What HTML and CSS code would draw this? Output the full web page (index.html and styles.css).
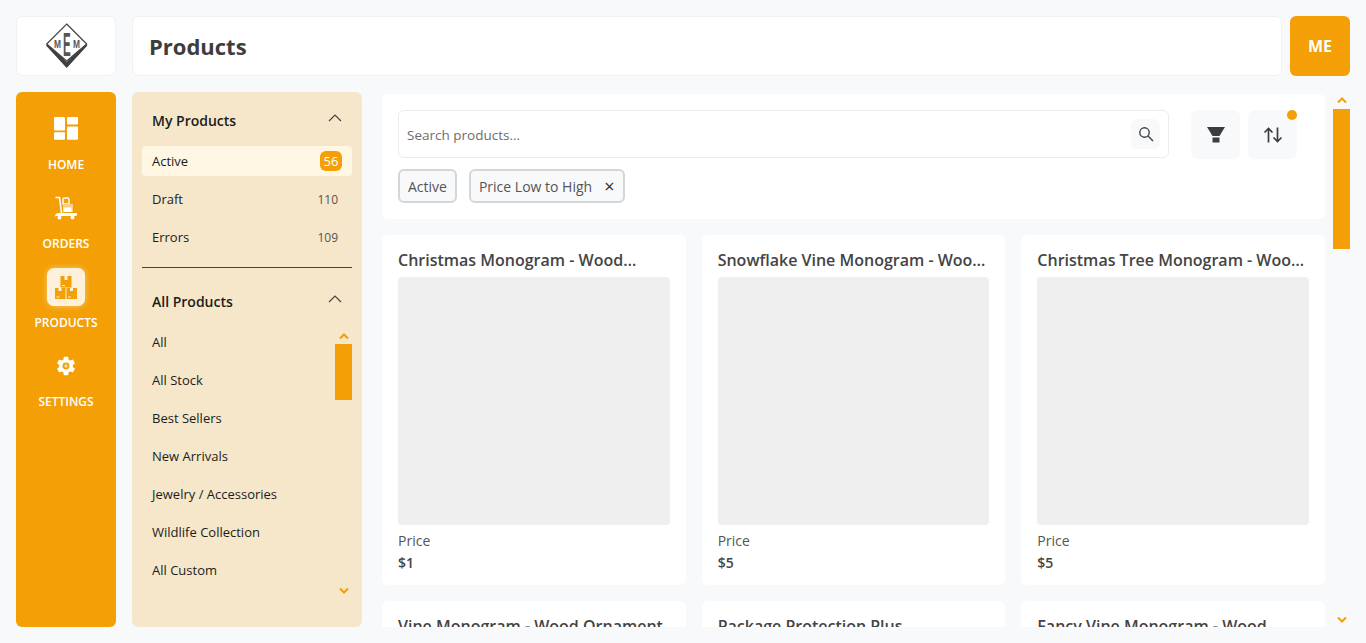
FILE: index.html
```html
<!DOCTYPE html>
<html lang="en">
<head>
	<meta charset="UTF-8">
	<title>Products</title>
	<link rel="stylesheet" href="styles.css">
</head>
<body>
	<div class="app">
		<header class="topbar">
			<div class="logo">
				<svg width="44" height="46" viewBox="0 0 44 46">
					<path d="M2 22.500 L22.700 45 L43.400 22.500 L41 20.500 L22.700 39 L4.400 20.500 Z" fill="#3f3f3f"/>
					<path d="M22.700 1 L42.700 21 L22.700 38 L2.700 21 Z" fill="#fff" stroke="#444" stroke-width="1.200"/>
					<text transform="translate(10 25) scale(.73 1)" class="logo-small">M</text>
					<text transform="translate(19 32.700) scale(.35 1)" class="logo-big">E</text>
					<text transform="translate(29 25) scale(.73 1)" class="logo-small">M</text>
				</svg>
			</div>
			<div class="title-bar"><h1>Products</h1></div>
			<div class="avatar">ME</div>
		</header>

		<div class="content">
			<nav class="sidenav">
				<a class="nav-item">
					<span class="nav-icon">
						<svg width="24" height="24" viewBox="0 0 24 24" fill="#fff">
							<rect x="0" y="0" width="11" height="13.500" rx="1"/>
							<rect x="0" y="15.200" width="11" height="7.500" rx="1"/>
							<rect x="13" y="0" width="11" height="7.500" rx="1"/>
							<rect x="13" y="9.500" width="11" height="13.200" rx="1"/>
						</svg>
					</span>
					<span>HOME</span>
				</a>
				<a class="nav-item">
					<span class="nav-icon">
						<svg width="24" height="24" viewBox="0 0 24 24">
							<path d="M1.500 1.500 H5.500 L7.500 17" fill="none" stroke="#fff" stroke-width="1.600"/>
							<path d="M9 8 V3.500 Q9 2 10.500 2 H13.500 Q15 2 15 3.500 V8 Z" fill="none" stroke="#fff" stroke-width="1.400"/>
							<rect x="9" y="8" width="10" height="8" fill="#f9cf85"/>
							<rect x="9.500" y="11.500" width="8" height="4.500" fill="#fff"/>
							<path d="M1 20.500 Q1 17 5 17 H23 V18.500 Q23 20 21 20 H2.500 Z" fill="#fff"/>
							<circle cx="5.500" cy="21.500" r="2" fill="#fff"/>
							<circle cx="18.500" cy="21.500" r="2" fill="#fff"/>
						</svg>
					</span>
					<span>ORDERS</span>
				</a>
				<a class="nav-item">
					<span class="nav-icon nav-icon-active">
						<svg width="22" height="23" viewBox="0 0 22 23" fill="#f39f05">
							<rect x="5.500" y="0" width="11" height="11.500"/>
							<rect x="0" y="12" width="10.500" height="11"/>
							<rect x="11.500" y="12" width="10.500" height="11"/>
							<rect x="9.500" y="0" width="3" height="4" fill="#fdf1dc"/>
							<rect x="3.500" y="12" width="3" height="3" fill="#fdf1dc"/>
							<rect x="15" y="12" width="3" height="3" fill="#fdf1dc"/>
							<rect x="7" y="9" width="3" height="1" fill="#fdf1dc"/>
							<rect x="1.500" y="20.500" width="3" height="1" fill="#fdf1dc"/>
							<rect x="13" y="20.500" width="3" height="1" fill="#fdf1dc"/>
						</svg>
					</span>
					<span>PRODUCTS</span>
				</a>
				<a class="nav-item">
					<span class="nav-icon">
						<svg width="22" height="22" viewBox="0 0 24 24">
							<path fill="#fff" fill-rule="evenodd" d="M19.430 12.980c.04-.32.070-.64.070-.98s-.03-.66-.07-.98l2.110-1.650c.19-.15.240-.42.120-.64l-2-3.460c-.12-.22-.39-.3-.61-.22l-2.490 1c-.52-.4-1.080-.73-1.690-.98l-.38-2.650A.488.488 0 0 0 14 2h-4c-.25 0-.46.18-.49.420l-.38 2.650c-.61.25-1.170.59-1.690.98l-2.490-1c-.23-.09-.49 0-.61.22l-2 3.460c-.13.22-.07.49.12.64l2.110 1.650c-.04.32-.07.65-.07.980s.03.66.07.98l-2.110 1.650c-.19.15-.24.42-.12.64l2 3.460c.12.22.39.3.61.22l2.490-1c.52.4 1.080.73 1.690.98l.38 2.650c.03.24.24.42.49.42h4c.25 0 .46-.18.49-.42l.38-2.650c.61-.25 1.170-.59 1.690-.98l2.490 1c.23.09.49 0 .61-.22l2-3.460c.12-.22.07-.49-.12-.64l-2.110-1.650zM12 15.800a3.800 3.800 0 1 1 0-7.600 3.800 3.800 0 0 1 0 7.600z"/>
							<circle cx="12" cy="12" r="1.800" fill="#fbdca6"/>
						</svg>
					</span>
					<span>SETTINGS</span>
				</a>
			</nav>

			<aside class="panel">
				<div class="panel-head">
					<span>My Products</span>
					<svg class="head-chevron" width="16" height="10" viewBox="0 0 16 10"><path d="M2 8 L8 2 L14 8" fill="none" stroke="#444" stroke-width="1.200"/></svg>
				</div>
				<ul class="my-list">
					<li class="active"><span>Active</span><span class="badge">56</span></li>
					<li><span>Draft</span><span class="count">110</span></li>
					<li><span>Errors</span><span class="count">109</span></li>
				</ul>
				<hr class="divider">
				<div class="panel-head panel-head-all">
					<span>All Products</span>
					<svg class="head-chevron" width="16" height="10" viewBox="0 0 16 10"><path d="M2 8 L8 2 L14 8" fill="none" stroke="#444" stroke-width="1.200"/></svg>
				</div>
				<div class="all-wrap">
					<ul class="all-list">
						<li>All</li>
						<li>All Stock</li>
						<li>Best Sellers</li>
						<li>New Arrivals</li>
						<li>Jewelry / Accessories</li>
						<li>Wildlife Collection</li>
						<li>All Custom</li>
					</ul>
					<div class="scroller scroller-small">
						<svg class="arrow" width="10" height="7" viewBox="0 0 10 7"><path d="M1 5.500 L5 1.500 L9 5.500" fill="none" stroke="#f39f05" stroke-width="2"/></svg>
						<div class="thumb"></div>
						<svg class="arrow arrow-down" width="10" height="7" viewBox="0 0 10 7"><path d="M1 1.500 L5 5.500 L9 1.500" fill="none" stroke="#f39f05" stroke-width="2"/></svg>
					</div>
				</div>
			</aside>

			<main class="main">
				<div class="main-col">
					<section class="toolbar">
						<div class="toolbar-left">
							<div class="search">
								<span class="search-text">Search products...</span>
								<span class="search-btn">
									<svg width="16" height="16" viewBox="0 0 16 16"><circle cx="6.500" cy="6.500" r="4.700" fill="none" stroke="#444" stroke-width="1.400"/><path d="M10 10 L15 15" stroke="#444" stroke-width="1.400"/></svg>
								</span>
							</div>
							<div class="chips">
								<span class="chip">Active</span>
								<span class="chip">Price Low to High<span class="chip-x">×</span></span>
							</div>
						</div>
						<div class="tool-btn">
							<svg width="18" height="16" viewBox="0 0 18 16" fill="#3d3d3d"><path d="M0 0 H18 L12.500 9 H5.500 Z"/><rect x="5.500" y="10.500" width="7" height="5"/></svg>
						</div>
						<div class="tool-btn">
							<span class="dot"></span>
							<svg width="20" height="16" viewBox="0 0 20 16" fill="none" stroke="#3d3d3d" stroke-width="1.700"><path d="M5.500 15.500 V1.500 M1.500 5.500 L5.500 1.500 L9.500 5.500"/><path d="M14.500 0.500 V14.500 M10.500 10.500 L14.500 14.500 L18.500 10.500"/></svg>
						</div>
					</section>

					<section class="grid">
						<article class="card">
							<h2>Christmas Monogram - Wood Ornament</h2>
							<div class="thumb-img"></div>
							<div class="price-label">Price</div>
							<div class="price">$1</div>
						</article>
						<article class="card">
							<h2>Snowflake Vine Monogram - Wood Ornament</h2>
							<div class="thumb-img"></div>
							<div class="price-label">Price</div>
							<div class="price">$5</div>
						</article>
						<article class="card">
							<h2>Christmas Tree Monogram - Wood Ornament</h2>
							<div class="thumb-img"></div>
							<div class="price-label">Price</div>
							<div class="price">$5</div>
						</article>
						<article class="card">
							<h2>Vine Monogram - Wood Ornament</h2>
							<div class="thumb-img"></div>
						</article>
						<article class="card">
							<h2>Package Protection Plus</h2>
							<div class="thumb-img"></div>
						</article>
						<article class="card">
							<h2>Fancy Vine Monogram - Wood</h2>
							<div class="thumb-img"></div>
						</article>
					</section>
				</div>
				<div class="scroller scroller-main">
					<svg class="arrow" width="10" height="7" viewBox="0 0 10 7"><path d="M1 5.500 L5 1.500 L9 5.500" fill="none" stroke="#f39f05" stroke-width="2"/></svg>
					<div class="thumb"></div>
					<svg class="arrow arrow-down" width="10" height="7" viewBox="0 0 10 7"><path d="M1 1.500 L5 5.500 L9 1.500" fill="none" stroke="#f39f05" stroke-width="2"/></svg>
				</div>
			</main>
		</div>
	</div>
</body>
</html>
```

FILE: styles.css
```css
* {
	box-sizing: border-box;
}
html, body {
	height: 100%;
	margin: 0;
}
body {
	overflow: hidden;
	background-color: #f8f9fb;
	font-family: "Open Sans", "Noto Sans", sans-serif;
	color: #3d3d3d;
}
.app {
	display: flex;
	flex-direction: column;
	gap: 16px;
	height: 643px;
	padding: 16px;
}

/* top bar */
.topbar {
	display: flex;
	flex: none;
	height: 60px;
}
.logo {
	display: flex;
	align-items: center;
	justify-content: center;
	flex: none;
	width: 100px;
	margin-right: 16px;
	background-color: #fff;
	border: 1px solid #f0f1f3;
	border-radius: 6px;
}
.logo-small, .logo-big {
	fill: #555;
	font-family: "Liberation Sans", sans-serif;
	font-weight: 700;
}
.logo-small {
	font-size: 11.500px;
}
.logo-big {
	font-size: 33px;
}
.title-bar {
	display: flex;
	align-items: center;
	flex: 1;
	padding-left: 16px;
	margin-right: 8px;
	background-color: #fff;
	border: 1px solid #eff0f2;
	border-radius: 6px;
}
.title-bar h1 {
	margin: 0;
	font-size: 22px;
	font-weight: 700;
	color: #3d3d3d;
}
.avatar {
	display: flex;
	align-items: center;
	justify-content: center;
	flex: none;
	width: 60px;
	background-color: #f39f05;
	border-radius: 6px;
	color: #fff;
	font-size: 16px;
	font-weight: 700;
}

.content {
	display: flex;
	flex: 1;
	min-height: 0;
}

/* left nav */
.sidenav {
	flex: none;
	width: 100px;
	margin-right: 16px;
	padding-top: 18px;
	background-color: #f39f05;
	border-radius: 6px;
}
.nav-item {
	display: flex;
	flex-direction: column;
	align-items: center;
	height: 79px;
	color: #fff;
	font-size: 12px;
	font-weight: 600;
}
.nav-icon {
	display: flex;
	align-items: center;
	justify-content: center;
	width: 38px;
	height: 38px;
	margin-bottom: 8px;
}
.nav-icon-active {
	background-color: #fdf1dc;
	border-radius: 7px;
	box-shadow: 0 0 6px rgba(255, 255, 255, .45);
}

/* products panel */
.panel {
	display: flex;
	flex-direction: column;
	flex: none;
	width: 230px;
	margin-right: 20px;
	padding: 0 10px;
	background-color: #f6e7ca;
	border-radius: 6px;
	color: #1c1c1c;
	font-size: 13px;
}
.panel-head {
	display: flex;
	align-items: center;
	justify-content: space-between;
	flex: none;
	height: 54px;
	padding: 2px 9px 0 10px;
	font-size: 14px;
	font-weight: 600;
}
.panel-head-all {
	margin-top: 5px;
}
.head-chevron {
	margin-top: -4px;
}
.panel ul {
	margin: 0;
	padding: 0;
	list-style: none;
}
.my-list li {
	display: flex;
	align-items: center;
	justify-content: space-between;
	height: 38px;
	padding: 0 14px 0 10px;
}
.my-list li.active {
	height: 30px;
	margin-bottom: 4px;
	padding-right: 10px;
	background-color: #fff6e4;
	border-radius: 4px;
}
.badge {
	width: 22px;
	line-height: 20px;
	text-align: center;
	background-color: #f39f05;
	border-radius: 6px;
	color: #fff;
}
.count {
	color: #555;
	font-size: 12px;
}
.divider {
	flex: none;
	width: 100%;
	margin: 11px 0 0;
	border: 0;
	border-top: 1px solid #444;
}
.all-wrap {
	display: flex;
	flex: 1;
	min-height: 0;
	margin-top: -4px;
}
.all-list {
	flex: 1;
}
.all-list li {
	display: flex;
	align-items: center;
	height: 38px;
	padding-left: 10px;
}
.scroller {
	display: flex;
	flex-direction: column;
	align-items: center;
	flex: none;
	width: 17px;
}
.thumb {
	width: 17px;
	background-color: #f39f05;
}
.arrow {
	flex: none;
}
.arrow-down {
	margin-top: auto;
}
.scroller-small {
	padding: 10px 0 33px;
}
.scroller-small .thumb {
	height: 56px;
	margin-top: 4px;
}

/* main column */
.main {
	display: flex;
	flex: 1;
	min-width: 0;
	overflow: hidden;
}
.main-col {
	flex: none;
	width: 943px;
	margin-right: 8px;
	padding-top: 2px;
	overflow: hidden;
}
.scroller-main {
	padding: 5px 0 4px;
}
.scroller-main .thumb {
	height: 140px;
	margin-top: 5px;
}
.toolbar {
	display: flex;
	align-items: flex-start;
	height: 125px;
	margin-bottom: 16px;
	padding: 16px 28px 0 16px;
	background-color: #fff;
	border-radius: 6px;
}
.toolbar-left {
	flex: 1;
	margin-right: 22px;
}
.search {
	display: flex;
	align-items: center;
	justify-content: space-between;
	height: 48px;
	padding: 0 8px;
	border: 1px solid #ececee;
	border-radius: 6px;
	font-size: 13.500px;
	color: #6d6d6d;
}
.search-text {
	padding-top: 1px;
}
.search-btn {
	display: flex;
	align-items: center;
	justify-content: center;
	width: 29px;
	height: 30px;
	background-color: #f8f9fb;
	border-radius: 6px;
}
.chips {
	display: flex;
	gap: 12px;
	margin-top: 11px;
}
.chip {
	display: flex;
	align-items: center;
	height: 34px;
	padding: 0 8px;
	background-color: #f8f9fb;
	border: 2px solid #d5d6d8;
	border-radius: 6px;
	font-size: 14px;
	color: #555;
}
.chip-x {
	margin: 0 1px 0 12px;
	font-size: 18px;
	color: #333;
}
.tool-btn {
	position: relative;
	display: flex;
	align-items: center;
	justify-content: center;
	flex: none;
	width: 49px;
	height: 49px;
	margin-left: 8px;
	background-color: #f8f9fb;
	border-radius: 7px;
}
.tool-btn:nth-child(2) {
	margin-left: 0;
}
.dot {
	position: absolute;
	top: 0;
	right: 0;
	width: 10px;
	height: 10px;
	background-color: #f39f05;
	border-radius: 50%;
}

/* product cards */
.grid {
	display: grid;
	grid-template-columns: repeat(3, minmax(0, 1fr));
	gap: 16px;
}
.card {
	height: 350px;
	padding: 14px 16px 0;
	background-color: #fff;
	border-radius: 6px;
}
.card h2 {
	display: -webkit-box;
	-webkit-box-orient: vertical;
	-webkit-line-clamp: 1;
	height: 23px;
	margin: 0 0 5px;
	overflow: hidden;
	font-size: 16px;
	line-height: 23px;
	font-weight: 600;
	color: #444;
}
.thumb-img {
	height: 248px;
	background-color: #efefef;
	border-radius: 4px;
}
.price-label {
	margin-top: 6px;
	font-size: 14px;
	line-height: 20px;
	color: #555;
}
.price {
	margin-top: 2px;
	font-size: 14px;
	line-height: 20px;
	font-weight: 600;
	color: #444;
}
```
